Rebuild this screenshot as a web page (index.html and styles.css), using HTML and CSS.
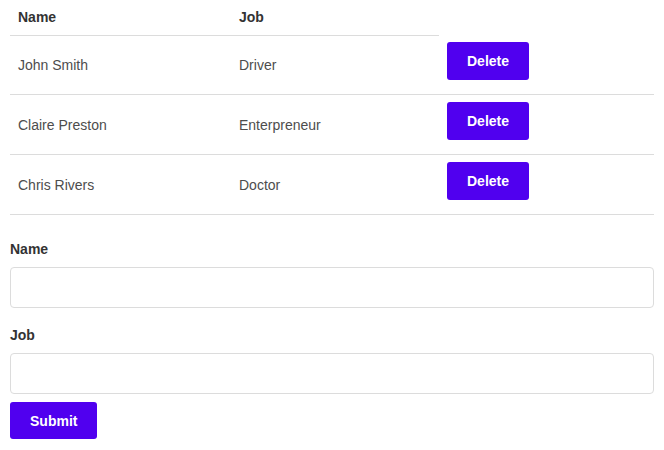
FILE: index.html
```html
<!DOCTYPE html>
<html lang="en">
<head>
<meta charset="utf-8">
<title>People</title>
<link rel="stylesheet" href="styles.css">
</head>
<body>
<div class="page">
  <table class="people">
    <colgroup>
      <col class="c-name">
      <col class="c-job">
      <col class="c-action">
    </colgroup>
    <thead>
      <tr><th>Name</th><th>Job</th></tr>
    </thead>
    <tbody>
      <tr><td>John Smith</td><td>Driver</td><td class="action"><button class="btn">Delete</button></td></tr>
      <tr><td>Claire Preston</td><td>Enterpreneur</td><td class="action"><button class="btn">Delete</button></td></tr>
      <tr><td>Chris Rivers</td><td>Doctor</td><td class="action"><button class="btn">Delete</button></td></tr>
    </tbody>
  </table>
  <form class="form">
    <label class="label" for="name">Name</label>
    <input class="input" id="name" type="text">
    <label class="label label-next" for="job">Job</label>
    <input class="input" id="job" type="text">
    <button class="btn btn-submit" type="button">Submit</button>
  </form>
</div>
</body>
</html>
```

FILE: styles.css
```css
html, body {
  margin: 0;
  padding: 0;
  background: #fff;
}
body {
  font-family: "Liberation Sans", Arial, sans-serif;
  font-size: 14px;
  color: #333;
}
.page {
  padding: 0 10px;
}
.people {
  width: 644px;
  border-collapse: collapse;
  table-layout: fixed;
}
.c-name { width: 221px; }
.c-job { width: 208px; }
.c-action { width: 215px; }
.people th {
  text-align: left;
  font-weight: bold;
  color: #333;
  height: 35px;
  padding: 0 8px;
  box-sizing: border-box;
  line-height: 16px;
  vertical-align: middle;
  border-bottom: 1px solid #dcdcdc;
}
.people td {
  padding: 0 8px;
  height: 59px;
  box-sizing: border-box;
  color: #4d4d4d;
  line-height: 16px;
  vertical-align: middle;
  border-bottom: 1px solid #dcdcdc;
}
.people td.action {
  vertical-align: top;
  padding: 7px 8px 14px;
}
.btn {
  display: inline-block;
  font-family: "Liberation Sans", Arial, sans-serif;
  font-size: 14px;
  font-weight: bold;
  line-height: 16px;
  color: #fff;
  background: #5000ef;
  border: none;
  border-radius: 3px;
  padding: 11px 20px;
  margin: 0;
  height: 38px;
  box-sizing: border-box;
}
.form {
  display: flex;
  flex-direction: column;
  align-items: flex-start;
  margin-top: 26px;
}
.label {
  font-weight: bold;
  color: #333;
  line-height: 16px;
  margin-bottom: 10px;
}
.label-next {
  margin-top: 19px;
}
.input {
  width: 644px;
  height: 41px;
  box-sizing: border-box;
  border: 1px solid #dcdcdc;
  border-radius: 4px;
  margin: 0;
  padding: 0 10px;
  font-family: "Liberation Sans", Arial, sans-serif;
  font-size: 14px;
}
.btn-submit {
  margin-top: 8px;
  height: 37px;
  padding: 10px 20px;
}
```
